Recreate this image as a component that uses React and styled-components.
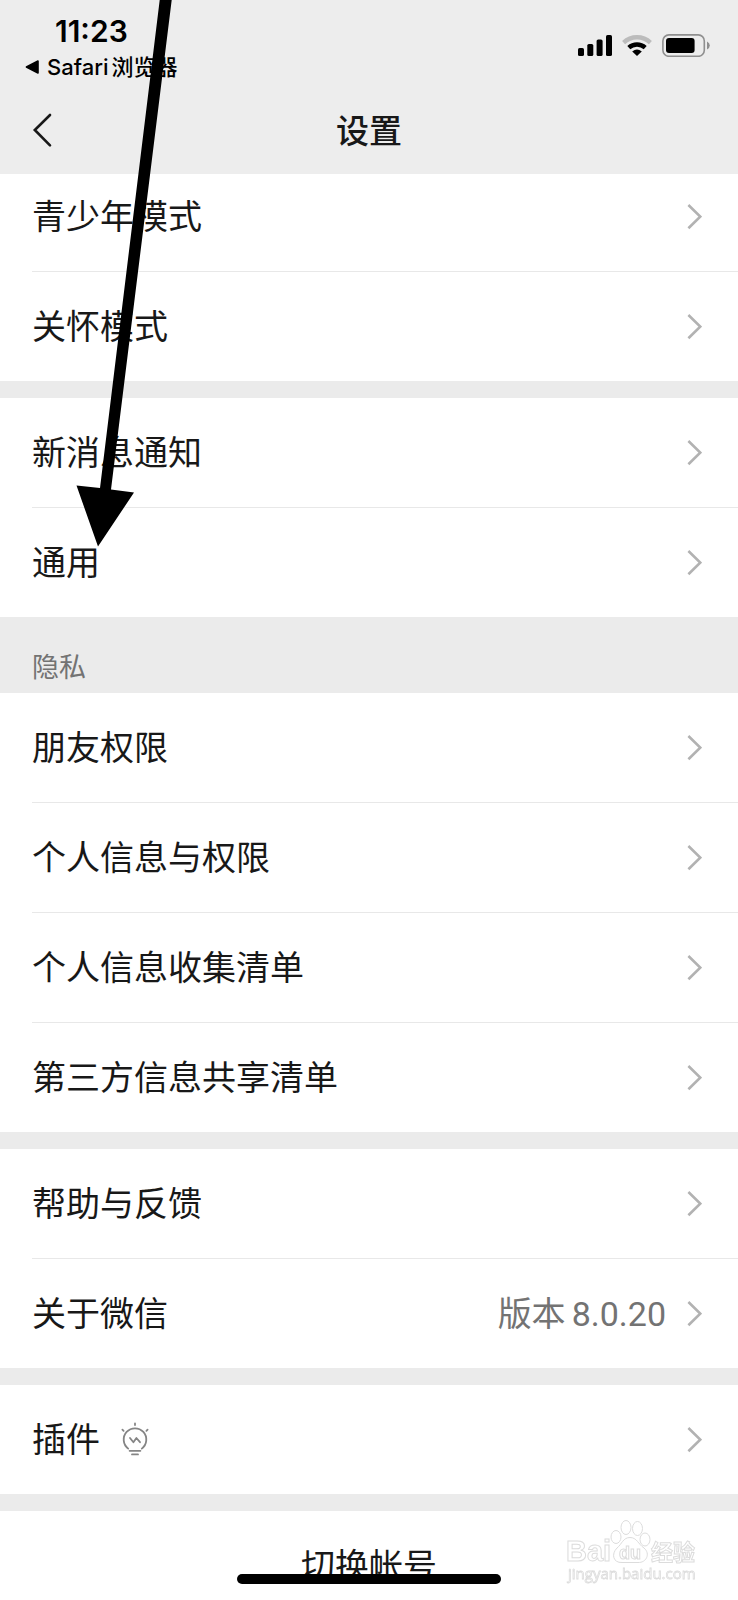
import styled, { createGlobalStyle } from "styled-components";

const GlobalStyle = createGlobalStyle`
* {
  box-sizing: border-box;
}
body {
  margin: 0;
  background-color: #ebebeb;
  font-family: Inter, "Noto Sans CJK SC", sans-serif;
}
`

const Screen = styled.div`
position: relative;
display: flex;
flex-direction: column;
height: 100vh;
overflow: hidden;
background-color: #ebebeb;
`

const Header = styled.header`
position: sticky;
top: 0;
z-index: 1;
flex-shrink: 0;
background-color: #ededed;
`

const StatusBar = styled.div`
display: flex;
justify-content: space-between;
align-items: flex-start;
height: 88px;
padding: 13px 28px 0 25px;
`

const Time = styled.div`
padding-left: 30px;
font-size: 30px;
line-height: 36px;
font-weight: 600;
color: #000;
`

const BackToApp = styled.a`
display: flex;
align-items: center;
gap: 7px;
font-size: 22px;
line-height: 36px;
font-weight: 500;
color: #000;
text-decoration: none;
`

const BackToAppText = styled.span`
display: flex;
gap: 3px;
`

const StatusIcons = styled.div`
display: flex;
gap: 10px;
padding-top: 21px;
`

const NavBar = styled.div`
display: grid;
grid-template-columns: 1fr auto 1fr;
align-items: center;
height: 86px;
padding: 0 32px;
`

const BackButton = styled.button`
display: flex;
justify-self: start;
padding: 0;
border: none;
background: none;
cursor: pointer;
`

const Title = styled.h1`
margin: 0;
font-size: 33px;
line-height: 48px;
font-weight: 500;
color: #181818;
`

const List = styled.main`
display: flex;
flex-direction: column;
gap: 17px;
margin-top: -12px;
`

const SectionTitle = styled.h2`
margin: -17px 0;
padding: 32px 32px 6px;
font-size: 27px;
line-height: 38px;
font-weight: 400;
color: #737373;
`

const Group = styled.section`
display: flex;
flex-direction: column;
background-color: #fff;
`

const Row = styled.button`
display: flex;
align-items: center;
justify-content: ${(props) => (props.$center ? "center" : "flex-start")};
height: 109px;
padding: ${(props) => (props.$center ? "0 32px" : "0 36px 0 32px")};
border: none;
background: none;
color: #181818;
font-family: inherit;
font-size: 34px;
line-height: 48px;
text-align: left;
cursor: pointer;
`

const Divider = styled.hr`
width: auto;
height: 1px;
margin: 0 0 0 32px;
border: none;
background-color: #e8e8e8;
`

const RowLabel = styled.span`
display: flex;
align-items: center;
gap: 20px;
flex-grow: ${(props) => (props.$center ? 0 : 1)};
`

const RowValue = styled.span`
display: flex;
gap: 6px;
margin-right: 20px;
color: #737373;
font-family: Roboto, "Noto Sans CJK SC", sans-serif;
`

const HomeIndicator = styled.div`
position: absolute;
bottom: 16px;
left: 50%;
z-index: 2;
width: 264px;
height: 10px;
margin-left: -132px;
border-radius: 5px;
background-color: #000;
`

const Arrow = styled.svg`
position: absolute;
top: 0;
left: 0;
z-index: 3;
pointer-events: none;
`

const Watermark = styled.svg`
position: absolute;
right: 36px;
bottom: 12px;
z-index: 2;
pointer-events: none;
`

const SignalIcon = () => (
  <svg width="34" height="23" viewBox="0 0 34 23">
    <rect x="0" y="14" width="6" height="8" rx="1.6" />
    <rect x="9.3" y="10" width="6" height="12" rx="1.6" />
    <rect x="18.6" y="5.4" width="6" height="16.6" rx="1.6" />
    <rect x="28" y="1" width="6" height="21" rx="1.6" />
  </svg>
)

const WifiIcon = () => (
  <svg width="30" height="23" viewBox="0 0 30 23" fill="none" strokeWidth="4.4">
    <path d="M1.6 8.6A19.6 19.6 0 0 1 28.4 8.6" stroke="#bcbcbc" />
    <path d="M6.8 13.6A12.2 12.2 0 0 1 23.2 13.6" stroke="#000" />
    <path d="M10.2 17.4Q15 13.6 19.8 17.4L15 22Z" fill="#000" />
  </svg>
)

const BatteryIcon = () => (
  <svg width="48" height="23" viewBox="0 0 48 23">
    <rect x="0.9" y="0.9" width="41.4" height="21.4" rx="6" fill="none" stroke="#8f8f8f" strokeWidth="1.6" />
    <rect x="4" y="4" width="28.6" height="15" rx="3" fill="#000" />
    <path d="M45 7.6Q47.8 9 47.8 11.6T45 15.6Z" fill="#8f8f8f" />
  </svg>
)

const ChevronIcon = () => (
  <svg width="16" height="28" viewBox="0 0 16 28" fill="none" stroke="#b2b2b2" strokeWidth="2.6">
    <path d="M2.4 2L14.2 13.600L2.4 25.200" />
  </svg>
)

const BulbIcon = () => (
  <svg width="30" height="36" viewBox="0 0 30 36" fill="none" stroke="#858585" strokeWidth="1.8" strokeLinecap="round">
    <path d="M8.2 26.6A11.3 11.3 0 1 1 21.8 26.6" />
    <path d="M15 1.4V3M2.4 7.6L3.6 8.8M27.6 7.6L26.4 8.8" />
    <path d="M10 16L13.400 20.200L16.400 16L20 20.200" strokeLinejoin="round" />
    <path d="M9.6 28.8H20.4M12 32.4H18" />
  </svg>
)

const groups = [
  { rows: [{ label: "青少年模式" }, { label: "关怀模式" }] },
  { rows: [{ label: "新消息通知" }, { label: "通用" }] },
  {
    title: "隐私",
    rows: [
      { label: "朋友权限" },
      { label: "个人信息与权限" },
      { label: "个人信息收集清单" },
      { label: "第三方信息共享清单" },
    ],
  },
  { rows: [{ label: "帮助与反馈" }, { label: "关于微信", value: ["版本", "8.0.20"] }] },
  { rows: [{ label: "插件", icon: <BulbIcon /> }] },
  { rows: [{ label: "切换帐号", center: true }] },
]

const SettingsRow = ({ label, value, icon, center }) => (
  <Row type="button" $center={center}>
    <RowLabel $center={center}>
      {label}
      {icon}
    </RowLabel>
    {value && (
      <RowValue>
        {value.map((part) => <span key={part}>{part}</span>)}
      </RowValue>
    )}
    {!center && <ChevronIcon />}
  </Row>
)

const App = () => {
  return (
    <Screen>
      <GlobalStyle />
      <Header>
        <StatusBar>
          <div>
            <Time>11:23</Time>
            <BackToApp href="#safari">
              <svg width="15" height="14" viewBox="0 0 15 14">
                <path d="M1.4 7L13 1V13Z" stroke="#000" strokeWidth="1.6" strokeLinejoin="round" />
              </svg>
              <BackToAppText>
                <span>Safari</span>
                <span>浏览器</span>
              </BackToAppText>
            </BackToApp>
          </div>
          <StatusIcons>
            <SignalIcon />
            <WifiIcon />
            <BatteryIcon />
          </StatusIcons>
        </StatusBar>
        <NavBar>
          <BackButton type="button" aria-label="返回">
            <svg width="20" height="36" viewBox="0 0 20 36" fill="none" stroke="#181818" strokeWidth="2.6" strokeLinecap="round">
              <path d="M18 2L2.8 17L18 32.400" />
            </svg>
          </BackButton>
          <Title>设置</Title>
        </NavBar>
      </Header>
      <List>
        {groups.map((group) => [
          group.title && <SectionTitle key={group.title}>{group.title}</SectionTitle>,
          <Group key={group.rows[0].label}>
            {group.rows.map((row, index) => [
              index > 0 && <Divider key={`${row.label}-divider`} />,
              <SettingsRow key={row.label} {...row} />,
            ])}
          </Group>,
        ])}
      </List>
      <Watermark width="136" height="70" viewBox="0 0 136 70" fill="#fff" stroke="#dcdcdc" strokeWidth="1">
        <ellipse cx="50" cy="19" rx="5" ry="6.5" />
        <ellipse cx="60" cy="9.5" rx="5" ry="7" />
        <ellipse cx="71.5" cy="10.5" rx="5" ry="7" />
        <ellipse cx="79" cy="21.500" rx="5" ry="6.5" />
        <path d="M64 19.500C71 19.500 72 26 78 30C85 36 80 45 72 44.500H56C47 45 45 36 51 30C56 26 57 19.500 64 19.500Z" />
        <text x="0" y="43" fontFamily="Liberation Sans" fontSize="29" fontWeight="700">Bai</text>
        <text x="53" y="41" fontFamily="Liberation Sans" fontSize="18" fontWeight="700">du</text>
        <text x="85" y="42" fontFamily="Noto Sans CJK SC" fontSize="22" fontWeight="700">经验</text>
        <text x="2" y="61" fontFamily="Open Sans" fontSize="15" strokeWidth="0.8">jingyan.baidu.com</text>
      </Watermark>
      <HomeIndicator />
      <Arrow width="180" height="550" viewBox="0 0 180 550">
        <path d="M159.700 0H171.700L111 489.500L134 492.500L98 546.500L76.500 485.500L100 488Z" />
      </Arrow>
    </Screen>
  )
}

export default App;
